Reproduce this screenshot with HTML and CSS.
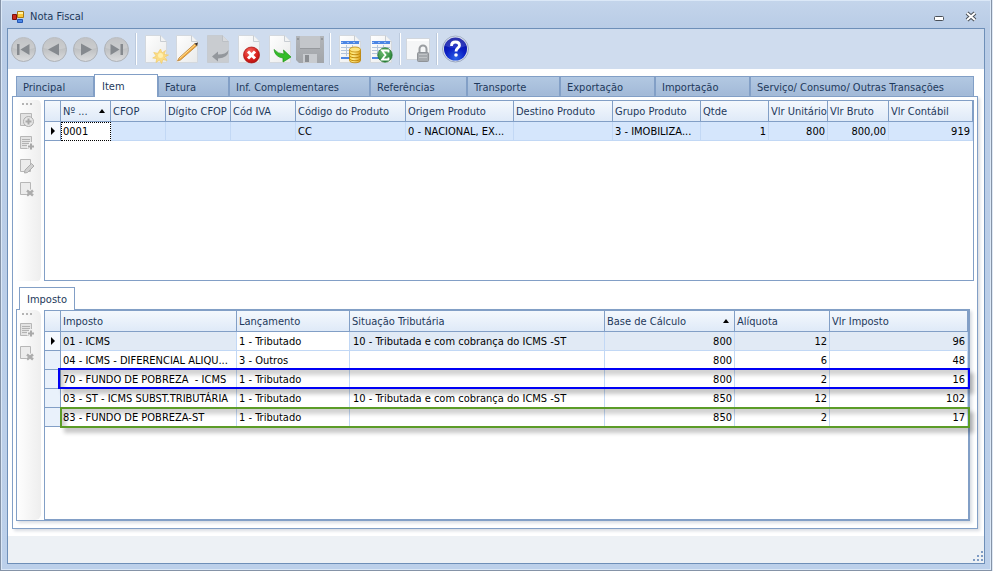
FILE: index.html
```html
<!DOCTYPE html>
<html lang="pt-BR">
<head>
<meta charset="utf-8">
<title>Nota Fiscal</title>
<link rel="stylesheet" href="styles.css">
</head>
<body>
<svg class="defs" width="0" height="0" aria-hidden="true">
  <defs>
    <linearGradient id="gDisc" x1="0" y1="0" x2="0" y2="1"><stop offset="0" stop-color="#b4b6b9"/><stop offset=".5" stop-color="#c0c2c4"/><stop offset="1" stop-color="#dcdddf"/></linearGradient>
    <linearGradient id="gPage" x1="0" y1="0" x2="1" y2="1"><stop offset="0" stop-color="#ffffff"/><stop offset="1" stop-color="#e9eaea"/></linearGradient>
    <linearGradient id="gSave" x1="0" y1="0" x2="0" y2="1"><stop offset="0" stop-color="#b2b5b9"/><stop offset="1" stop-color="#a2a5a9"/></linearGradient>
    <radialGradient id="gRed" cx=".4" cy=".3" r=".8"><stop offset="0" stop-color="#f56a60"/><stop offset=".6" stop-color="#d8201c"/><stop offset="1" stop-color="#a80d0d"/></radialGradient>
    <radialGradient id="gGreen" cx=".4" cy=".3" r=".8"><stop offset="0" stop-color="#6fbf72"/><stop offset="1" stop-color="#1d7a2e"/></radialGradient>
    <radialGradient id="gBlue" cx=".5" cy=".9" r=".9"><stop offset="0" stop-color="#2a62e8"/><stop offset=".5" stop-color="#0b1fc4"/><stop offset="1" stop-color="#0a0f9c"/></radialGradient>
    <linearGradient id="gGold" x1="0" y1="0" x2="1" y2="0"><stop offset="0" stop-color="#f9d648"/><stop offset=".4" stop-color="#fde98a"/><stop offset="1" stop-color="#d99a12"/></linearGradient>
    <symbol id="disc" viewBox="0 0 31 30"><circle cx="15.500" cy="15.500" r="12" fill="url(#gDisc)" stroke="#adb1b7"/><path d="M4.500 14a11 11 0 0 1 22 0q-11 3-22 0z" fill="#fff" opacity=".18"/></symbol>
    <symbol id="page" viewBox="0 0 31 30"><path d="M5.500 1.500h15l6 6v21h-21z" fill="url(#gPage)" stroke="#d3d8de"/><path d="M20.500 1.500v6h6" fill="#f2f3f4" stroke="#c8cdd2"/></symbol>
    <symbol id="sheet" viewBox="0 0 31 30"><use href="#page"/><path d="M7 7h18v3H7zM7 23h14v2H7z" fill="#4c86e4"/><path d="M7 8.500h18" stroke="#9fc1f5" stroke-dasharray="2 4"/><path d="M7 13.500h18M7 16.500h18M7 19.500h18M12.500 11v11M18.500 11v11" stroke="#b5c6dc"/></symbol>
    <symbol id="addRow" viewBox="0 0 16 16"><path d="M1.500 1.500h11v12h-11z" fill="#e3e3e3" stroke="#b7b7b7"/><path d="M3 4.500h8M3 6.500h8M3 8.500h8M3 10.500h6" stroke="#b3b3b3"/><path d="M12 7v8M8 11.500h7" stroke="#f0f0f0" stroke-width="4"/><path d="M12 8.500v6M9 11.500h6" stroke="#a9a9a9" stroke-width="2"/></symbol>
    <symbol id="delRow" viewBox="0 0 16 16"><path d="M1.500 1.500h10v12h-10z" fill="#ececec" stroke="#b7b7b7"/><path d="M8 9l6 5M14 9l-6 5" stroke="#f0f0f0" stroke-width="4"/><path d="M8 9.500l6 5M14 9.500l-6 5" stroke="#acacac" stroke-width="2.500"/></symbol>
  </defs>
</svg>
<main class="window">
  <header class="titlebar">
    <svg class="app-icon" width="14" height="14" viewBox="0 0 14 14" aria-hidden="true"><path d="M.5 4.500h4v5h-4z" fill="#c9281c" stroke="#7f1008"/><path d="M5.500 1.500h6v6h-6z" fill="#fcc838" stroke="#a97a12"/><path d="M6 2h5v2H6z" fill="#fff3a8"/><path d="M5.500 9.500h5v3h-5z" fill="#4c87e6" stroke="#2356b4"/></svg>
    <h1 class="title">Nota Fiscal</h1>
    <button class="win-btn" aria-label="Minimizar"><svg width="12" height="12" viewBox="0 0 12 12"><rect x="1.500" y="5.500" width="9" height="4" rx="1" fill="#fff" stroke="#4a5058"/></svg></button>
    <button class="win-btn" aria-label="Fechar"><svg width="12" height="12" viewBox="0 0 12 12"><path d="M2 2l8 7M10 2l-8 7" stroke="#4a5058" stroke-width="4"/><path d="M2 2l8 7M10 2l-8 7" stroke="#fff" stroke-width="2"/></svg></button>
  </header>
  <section class="client">
    <div class="toolbar" role="toolbar" aria-label="Ações">
      <button class="tool" aria-label="Primeiro"><svg viewBox="0 0 31 30"><use href="#disc"/><path d="M9 10h2.500v11H9zM21.500 10v11l-9-5.500z" fill="#85898e"/></svg></button>
      <button class="tool" aria-label="Anterior"><svg viewBox="0 0 31 30"><use href="#disc"/><path d="M20 9.500v12l-11-6z" fill="#85898e"/></svg></button>
      <button class="tool" aria-label="Próximo"><svg viewBox="0 0 31 30"><use href="#disc"/><path d="M11 9.500v12l11-6z" fill="#85898e"/></svg></button>
      <button class="tool" aria-label="Último"><svg viewBox="0 0 31 30"><use href="#disc"/><path d="M19.500 10H22v11h-2.500zM9.500 10v11l9-5.500z" fill="#85898e"/></svg></button>
      <span class="sep"></span>
      <button class="tool" aria-label="Novo"><svg viewBox="0 0 31 30"><use href="#page"/><path d="M20.500 15l1.500 4 3.500-2.500-1.500 4 4.500.5-4 2 2.500 3.500-4-1-1.500 4-2-3.500-3.500 2.500.7-4-4-.5 3.500-2-2.500-3.500 4 .8z" fill="#fbdc84" stroke="#f0cb6a" stroke-width=".7"/><circle cx="20.500" cy="21.500" r="2.500" fill="#fff0b0"/></svg></button>
      <button class="tool" aria-label="Editar"><svg viewBox="0 0 31 30"><use href="#page"/><path d="M8 24L24 9.500l2 2L9.500 26l-3 1z" fill="#f2a93a" stroke="#b8823a" stroke-width=".8"/><path d="M8.500 24.500L24.500 10.500" stroke="#ffe09a"/><path d="M23.500 9.500L27 8.500 26 12z" fill="#3a3330"/></svg></button>
      <button class="tool" aria-label="Desfazer"><svg viewBox="0 0 31 30"><path d="M5.500 1.500h15l6 6v21h-21z" fill="#c9ccd0" stroke="#c6cbd1"/><path d="M20.500 1.500v6h6" fill="#d8dadd" stroke="#bcc0c5"/><path d="M10 22.500l6-5v3q8 0 10.500-4.500 0 8-10.500 8.500v3z" fill="#93979c"/></svg></button>
      <button class="tool" aria-label="Excluir"><svg viewBox="0 0 31 30"><use href="#page"/><circle cx="18.500" cy="21" r="8" fill="url(#gRed)" stroke="#a51512" stroke-width=".7"/><path d="M15 17.500l7 7M22 17.500l-7 7" stroke="#fff" stroke-width="3"/></svg></button>
      <button class="tool" aria-label="Enviar"><svg viewBox="0 0 31 30"><use href="#page"/><path d="M10 15.500q4 4.500 10 4.500l-.5-4 7.500 7-8 5v-4q-8-1-9-8.500z" fill="#34bd28" stroke="#1e9417" stroke-width=".7"/></svg></button>
      <button class="tool" aria-label="Salvar"><svg viewBox="0 0 31 30"><path d="M1 2h28v27H4l-3-3z" fill="url(#gSave)"/><path d="M5 2h20v12H5z" fill="#c3c6ca"/><path d="M5 14h20v1H5z" fill="#96999d"/><path d="M8 20h14v9H8z" fill="#c8cbcf"/><path d="M10 21h4v7h-4z" fill="#8b8e92"/><path d="M2 4h2v2H2zM26 4h2v2h-2z" fill="#94979b"/></svg></button>
      <span class="sep"></span>
      <button class="tool" aria-label="Valores"><svg viewBox="0 0 31 30"><use href="#sheet"/><path d="M15.500 15.500v11c0 3 11 3 11 0v-11z" fill="url(#gGold)" stroke="#b98208" stroke-width=".8"/><path d="M15.500 18.500c0 3 11 3 11 0M15.500 21.500c0 3 11 3 11 0M15.500 24.500c0 3 11 3 11 0" fill="none" stroke="#c38a0a"/><ellipse cx="21" cy="15.500" rx="5.500" ry="2.500" fill="#fde480" stroke="#c38a0a" stroke-width=".8"/></svg></button>
      <button class="tool" aria-label="Totais"><svg viewBox="0 0 31 30"><use href="#sheet"/><circle cx="20" cy="21" r="7.200" fill="url(#gGreen)" stroke="#1b6d2a" stroke-width=".7"/><path d="M23.500 18.500v-2H17l3.500 4.500-3.500 4.500h6.500v-2" fill="none" stroke="#fff" stroke-width="1.800"/></svg></button>
      <span class="sep"></span>
      <button class="tool tool-lock" aria-label="Bloquear"><svg viewBox="0 0 29 30"><path d="M2.500 4.500h23v21h-23z" fill="#f5f6f7" stroke="#d2d7dd"/><path d="M3 5h22v2H3z" fill="#fff"/><path d="M15.500 19v-4a3.500 3.500 0 0 1 7 0v4" fill="none" stroke="#9a9da1" stroke-width="2"/><rect x="13.500" y="18.500" width="11" height="9" rx="1" fill="#a6aaae" stroke="#8f9398"/><path d="M15 20.500h8M15 23.500h8" stroke="#c0c3c6"/></svg></button>
      <span class="sep"></span>
      <button class="tool" aria-label="Ajuda"><svg viewBox="0 0 31 30"><circle cx="14.500" cy="15" r="13" fill="#d8e0ee" stroke="#9aa7c0"/><circle cx="14.500" cy="15" r="11.500" fill="url(#gBlue)"/><path d="M4 12a10.500 10.500 0 0 1 21 0q-10 4-21 0z" fill="#fff" opacity=".14"/><path d="M10.500 12q0-4 4-4t4 3.500c0 2.500-3.500 2.500-3.500 6" fill="none" stroke="#fff" stroke-width="2.800"/><circle cx="15" cy="21" r="1.800" fill="#fff"/></svg></button>
    </div>

    <div class="content">
      <div class="tabs" role="tablist">
        <button class="tab" role="tab">Principal</button>
        <button class="tab tab-active" role="tab" aria-selected="true">Item</button>
        <button class="tab" role="tab">Fatura</button>
        <button class="tab" role="tab">Inf. Complementares</button>
        <button class="tab" role="tab">Referências</button>
        <button class="tab" role="tab">Transporte</button>
        <button class="tab" role="tab">Exportação</button>
        <button class="tab" role="tab">Importação</button>
        <button class="tab" role="tab">Serviço/ Consumo/ Outras Transações</button>
      </div>
      <div class="panel">
        <div class="items">
          <div class="side" role="toolbar" aria-label="Itens">
            <span class="grip"></span>
            <button class="side-btn" aria-label="Adicionar"><svg width="16" height="16" viewBox="0 0 16 16"><path d="M1.500 1.500h11v12h-11z" fill="#e3e3e3" stroke="#b7b7b7"/><circle cx="9.500" cy="9.500" r="5" fill="#e6e6e6" stroke="#adadad"/><path d="M9.500 6.500v6M6.500 9.500h6" stroke="#a9a9a9" stroke-width="2"/></svg></button>
            <button class="side-btn" aria-label="Adicionar linha"><svg width="16" height="16"><use href="#addRow"/></svg></button>
            <button class="side-btn" aria-label="Editar linha"><svg width="16" height="16" viewBox="0 0 16 16"><path d="M1.500 1.500h10v12h-10z" fill="#ececec" stroke="#b7b7b7"/><path d="M6 12l6.500-6.500 2.500 2.500L8.500 14.500 5.500 15z" fill="#d0d0d0" stroke="#adadad"/></svg></button>
            <button class="side-btn" aria-label="Excluir linha"><svg width="16" height="16"><use href="#delRow"/></svg></button>
          </div>
          <div class="grid">
            <table>
              <colgroup><col class="c16"><col class="c50"><col class="c55"><col class="c65"><col class="c65"><col class="c110"><col class="c108"><col class="c99"><col class="c88"><col class="c68"><col class="c59"><col class="c61"><col></colgroup>
              <thead><tr><th></th><th>Nº ...<span class="sort"></span></th><th>CFOP</th><th>Dígito CFOP</th><th>Cód IVA</th><th>Código do Produto</th><th>Origem Produto</th><th>Destino Produto</th><th>Grupo Produto</th><th>Qtde</th><th>Vlr Unitário</th><th>Vlr Bruto</th><th>Vlr Contábil</th></tr></thead>
              <tbody><tr class="current"><td class="mark"><span class="arrow"></span></td><td class="focus">0001</td><td></td><td></td><td></td><td>CC</td><td>0 - NACIONAL, EX...</td><td></td><td>3 - IMOBILIZA...</td><td class="num">1</td><td class="num">800</td><td class="num">800,00</td><td class="num">919</td></tr></tbody>
            </table>
          </div>
        </div>

        <div class="subtabs" role="tablist"><button class="subtab" role="tab" aria-selected="true">Imposto</button></div>
        <div class="taxes">
          <div class="side" role="toolbar" aria-label="Impostos">
            <span class="grip"></span>
            <button class="side-btn" aria-label="Adicionar imposto"><svg width="16" height="16"><use href="#addRow"/></svg></button>
            <button class="side-btn" aria-label="Excluir imposto"><svg width="16" height="16"><use href="#delRow"/></svg></button>
          </div>
          <div class="grid">
            <table>
              <colgroup><col class="c16"><col class="c176"><col class="c113"><col class="c255"><col class="c130"><col class="c95"><col></colgroup>
              <thead><tr><th></th><th>Imposto</th><th>Lançamento</th><th>Situação Tributária</th><th>Base de Cálculo<span class="sort"></span></th><th>Alíquota</th><th>Vlr Imposto</th></tr></thead>
              <tbody>
                <tr class="picked"><td class="mark"><span class="arrow"></span></td><td>01 - ICMS</td><td class="plain">1 - Tributado</td><td class="indent">10 - Tributada e com cobrança do ICMS -ST</td><td class="num">800</td><td class="num">12</td><td class="num">96</td></tr>
                <tr><td class="mark"></td><td>04 - ICMS - DIFERENCIAL ALIQU...</td><td>3 - Outros</td><td></td><td class="num">800</td><td class="num">6</td><td class="num">48</td></tr>
                <tr><td class="mark"></td><td>70 - FUNDO DE POBREZA&nbsp; - ICMS</td><td>1 - Tributado</td><td></td><td class="num">800</td><td class="num">2</td><td class="num">16</td></tr>
                <tr><td class="mark"></td><td>03 - ST - ICMS SUBST.TRIBUTÁRIA</td><td>1 - Tributado</td><td class="indent">10 - Tributada e com cobrança do ICMS -ST</td><td class="num">850</td><td class="num">12</td><td class="num">102</td></tr>
                <tr><td class="mark"></td><td>83 - FUNDO DE POBREZA-ST</td><td>1 - Tributado</td><td></td><td class="num">850</td><td class="num">2</td><td class="num">17</td></tr>
              </tbody>
            </table>
            <div class="frame frame-blue"></div>
            <div class="frame frame-green"></div>
          </div>
        </div>
      </div>
    </div>
    <footer class="status"><svg width="10" height="12" viewBox="0 0 10 12" aria-hidden="true"><path d="M8 0h2v2H8zM4 4h2v2H4zM8 4h2v2H8zM0 8h2v2H0zM4 8h2v2H4zM8 8h2v2H8z" fill="#7f9cc4"/></svg></footer>
  </section>
</main>
</body>
</html>
```
FILE: styles.css
```css
* { box-sizing: border-box; }
body {
  margin: 0;
  padding-right: 1px;
  background: #dfe9f5;
  color: #000;
  font: 11px/14px "DejaVu Sans Condensed", "DejaVu Sans", sans-serif;
}
button {
  margin: 0;
  padding: 0;
  border: 0;
  background: none;
  color: inherit;
  font: inherit;
}
.defs { position: absolute; }
.window {
  display: flex;
  flex-direction: column;
  min-height: 100vh;
  padding: 0 6px 6px;
  border: solid #8593a7;
  border-width: 0 1px 1px;
  background: linear-gradient(#c4d5eb, #b9cce6 28px, #bcd0ea);
  box-shadow: inset 0 0 0 1px #dbe8f7;
}
.titlebar {
  display: flex;
  align-items: center;
  height: 28px;
  padding: 6px 0 0 5px;
  gap: 4px;
}
.title {
  flex: 1;
  margin: 0;
  color: #1e395b;
  font-size: 11px;
  font-weight: normal;
}
.win-btn { width: 28px; height: 20px; }
.win-btn svg { display: block; margin: auto; }
.client {
  display: flex;
  flex: 1;
  flex-direction: column;
  border: 1px solid #6e8fb8;
  background: #fff;
}
.toolbar {
  display: flex;
  align-items: center;
  height: 40px;
  background: #cfdcee;
}
.tool { width: 31px; height: 30px; }
.tool-lock { width: 29px; }
.tool svg { display: block; width: 100%; height: 100%; }
.sep {
  width: 8px;
  height: 32px;
  background: linear-gradient(90deg, transparent 3px, #bccadd 3px, #bccadd 4px, #fff 4px, #fff 5px, transparent 5px);
}
.content {
  display: flex;
  flex: 1;
  flex-direction: column;
  padding: 5px 6px 7px 4px;
}
.tabs {
  display: grid;
  grid-template-columns: 78px 64px 71px 141px 97px 93px 95px 95px 1fr;
  align-items: end;
  height: 22px;
  padding: 0 4px;
}
.tab {
  height: 20px;
  padding: 2px 0 0 6px;
  border: solid #829fc6;
  border-width: 1px 1px 0;
  background: linear-gradient(#b2c8e2, #a2b9d7);
  color: #1e395b;
  text-align: left;
  white-space: nowrap;
}
.tab-active {
  z-index: 1;
  height: 23px;
  margin-bottom: -1px;
  padding: 1px 0 0 7px;
  background: #fff;
}
.panel {
  display: flex;
  flex: 1;
  flex-direction: column;
  padding: 3px 3px 7px;
  border: 1px solid #829fc6;
  box-shadow: 2px 2px 3px #d8dce2;
}
.items, .taxes { display: flex; gap: 3px; }
.items { height: 181px; padding-left: 1px; }
.side {
  display: flex;
  flex-direction: column;
  flex: none;
  align-items: center;
  width: 24px;
  padding-top: 3px;
  gap: 7px;
  border-radius: 0 6px 6px 0;
  background: linear-gradient(90deg, #fefefe, #eee);
}
.items .side { width: 27px; margin-right: -3px; border-right: 3px solid #fff; }
.grip {
  width: 11px;
  height: 2px;
  margin-right: 4px;
  background: repeating-linear-gradient(90deg, #b4b4b4 0 2px, transparent 2px 4px);
}
.side-btn { width: 16px; height: 16px; margin-right: 4px; }
.side-btn svg { display: block; }
.grid {
  position: relative;
  flex: 1;
  min-width: 0;
  border: 1px solid #829fc6;
  background: #fff;
}
table {
  width: 100%;
  border-spacing: 0;
  table-layout: fixed;
}
th, td {
  overflow: hidden;
  padding: 2px 2px 0;
  border: solid #c2d8f5;
  border-width: 0 1px 1px 0;
  font-weight: normal;
  text-align: left;
  white-space: nowrap;
}
th {
  position: relative;
  height: 21px;
  border-color: #829fc6;
  background: linear-gradient(#f4f8fd, #dfeaf8);
  color: #1e395b;
}
td { height: 19px; }
.num { text-align: right; }
.indent { padding-left: 3px; }
.mark { padding: 0; border-color: #829fc6; background: #e9f1fb; }
.current td { background: #d5e6fc; }
.current .mark, .picked .mark { background: #f5f9fe; }
.picked td { background: #e1eaf5; }
.picked .plain, .current .focus { background: #fff; }
.current .focus { padding: 0 1px; border: 1px dotted #000; }
.sort {
  position: absolute;
  top: 8px;
  right: 5px;
  border: solid transparent;
  border-width: 0 3px 4px;
  border-bottom-color: #000;
}
.arrow {
  display: block;
  width: 0;
  margin-left: 6px;
  border: solid transparent;
  border-width: 4px 0 4px 4px;
  border-left-color: #000;
}
.c16 { width: 16px; }
.c50 { width: 50px; }
.c55 { width: 55px; }
.c59 { width: 59px; }
.c61 { width: 61px; }
.c65 { width: 65px; }
.c68 { width: 68px; }
.c88 { width: 88px; }
.c95 { width: 95px; }
.c99 { width: 99px; }
.c108 { width: 108px; }
.c110 { width: 110px; }
.c113 { width: 113px; }
.c130 { width: 130px; }
.c176 { width: 176px; }
.c255 { width: 255px; }
.subtabs { padding: 6px 0 0 3px; }
.subtab {
  position: relative;
  z-index: 1;
  display: block;
  height: 23px;
  margin-bottom: -1px;
  padding: 2px 7px 0;
  border: solid #829fc6;
  border-width: 1px 1px 0;
  background: #fff;
  color: #1e395b;
}
.taxes {
  flex: 1;
  margin-right: 4px;
  border: 1px solid #829fc6;
  box-shadow: 2px 2px 3px #d8dce2;
}
.frame {
  position: absolute;
  right: -2px;
  height: 21px;
  border: 2px solid;
  box-shadow: 4px 5px 4px rgba(0, 0, 0, .22), inset 4px 5px 4px rgba(0, 0, 0, .18);
  pointer-events: none;
}
.frame-blue { top: 57px; left: 13px; border-color: #0000f5; }
.frame-green { top: 96px; left: 15px; border-color: #5c9c27; }
.status {
  display: flex;
  align-items: flex-end;
  justify-content: flex-end;
  height: 27px;
  padding-right: 1px;
  background: #edf1f5;
}
.status svg { display: block; }
```
